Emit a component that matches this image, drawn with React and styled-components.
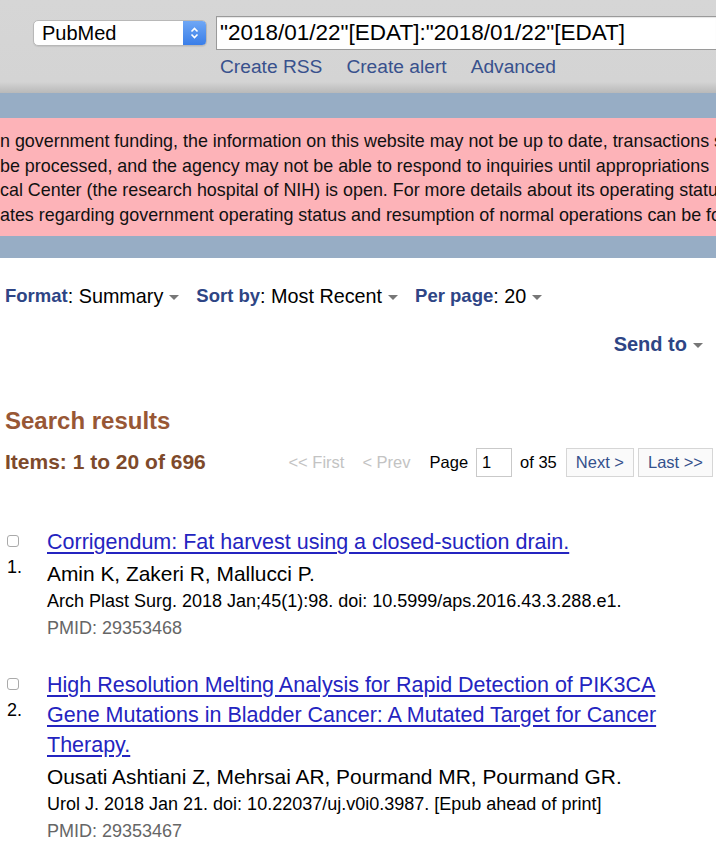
import React from 'react';
import styled, { createGlobalStyle } from 'styled-components';

const GlobalStyle = createGlobalStyle`
  html, body {
    margin: 0;
    padding: 0;
    background: #fff;
    font-family: "Liberation Sans", Arial, Helvetica, sans-serif;
    overflow: hidden;
  }
`;

const Page = styled.div`
  width: 716px;
  height: 855px;
  overflow: hidden;
`;

const SearchBar = styled.div`
  height: 93px;
  background: linear-gradient(#d6d6d6 0%, #d4d4d4 88%, #b9b9b9 100%);
  padding: 16px 0 0 33px;
  box-sizing: border-box;
`;

const SearchRow = styled.div`
  display: flex;
  align-items: center;
  gap: 9px;
`;

const DbSelect = styled.div`
  width: 174px;
  height: 26px;
  box-sizing: border-box;
  border: 1px solid #b8b8b8;
  border-radius: 5px;
  background: #fff;
  display: flex;
  align-items: center;
  justify-content: space-between;
  font-size: 20px;
  color: #000;
  padding-left: 8px;
  overflow: hidden;
  box-shadow: 0 1px 1px rgba(0, 0, 0, 0.08);
`;

const Stepper = styled.div`
  width: 23px;
  height: 100%;
  background: linear-gradient(#6fa7f5, #3a7ee8);
  display: flex;
  align-items: center;
  justify-content: center;
`;

const QueryInput = styled.div`
  flex: 1;
  height: 34px;
  box-sizing: border-box;
  border: 1px solid #9a9a9a;
  border-right: none;
  background: #fff;
  font-size: 22.5px;
  line-height: 32px;
  padding-left: 3px;
  white-space: nowrap;
  overflow: hidden;
  box-shadow: inset 0 1px 1px rgba(0, 0, 0, 0.1);
`;

const SearchLinks = styled.div`
  display: flex;
  gap: 24px;
  margin: 6px 0 0 187px;
`;

const TopLink = styled.span`
  font-size: 19.2px;
  color: #38518d;
`;

const Band = styled.div`
  background: #97adc5;
  padding: 25px 0 22px;
`;

const Notice = styled.div`
  background: #fdb3b8;
  padding: 11px 0 9px;
  overflow: hidden;
`;

const NoticeLine = styled.div`
  font-size: 17.9px;
  line-height: 24.5px;
  color: #111;
  white-space: nowrap;
`;

const Toolbar = styled.div`
  display: flex;
  align-items: center;
  gap: 17px;
  padding: 27px 0 0 5px;
  font-size: 19.8px;
  height: 22px;
`;

const Setting = styled.span`
  display: inline-flex;
  align-items: center;
  color: #000;
`;

const Label = styled.span`
  font-weight: bold;
  font-size: 18.5px;
  color: #2e4585;
`;

const Caret = styled.span`
  display: inline-block;
  width: 0;
  height: 0;
  border-left: 5.5px solid transparent;
  border-right: 5.5px solid transparent;
  border-top: 5px solid #777;
  margin-left: 6px;
  margin-top: 3px;
`;

const SendRow = styled.div`
  display: flex;
  justify-content: flex-end;
  padding: 26px 13px 0 0;
  height: 22px;

  ${Label} {
    font-size: 20px;
  }
`;

const Heading = styled.h2`
  margin: 52px 0 0 5px;
  font-size: 24px;
  line-height: 28px;
  color: #985735;
  font-weight: bold;
`;

const ItemsRow = styled.div`
  display: flex;
  align-items: center;
  justify-content: space-between;
  margin: 12px 3px 0 5px;
  height: 30px;
`;

const Items = styled.div`
  font-size: 21px;
  font-weight: bold;
  color: #7e4a2b;
`;

const Pager = styled.div`
  display: flex;
  align-items: center;
  font-size: 16.5px;
`;

const PagerText = styled.span`
  color: ${(p) => (p.muted ? '#c3c3c3' : '#000')};
  margin-right: ${(p) => p.gap || 0}px;
`;

const PageBox = styled.div`
  width: 36px;
  height: 29px;
  box-sizing: border-box;
  border: 1px solid #c9c9c9;
  padding-left: 5px;
  line-height: 27px;
  margin-right: 8px;
`;

const PagerButton = styled.div`
  height: 27px;
  line-height: 27px;
  border: 1px solid #d6d6d6;
  background: #fafafa;
  color: #34508c;
  padding: 0 9px;
  margin-left: ${(p) => p.gap || 0}px;
`;

const Results = styled.div`
  margin-top: 50px;
`;

const Result = styled.div`
  display: grid;
  grid-template-columns: 47px 1fr;
  margin-bottom: 28px;
`;

const Marker = styled.div`
  padding-left: 7px;
  padding-top: 8px;
`;

const Check = styled.div`
  width: 12px;
  height: 12px;
  box-sizing: border-box;
  border: 1px solid #aaa;
  border-radius: 3px;
  background: #fff;
`;

const Num = styled.div`
  font-size: 18px;
  margin-top: 10px;
  color: #000;
`;

const Title = styled.a`
  display: block;
  font-size: 21.5px;
  line-height: 30px;
  color: #2424c0;
  text-decoration: underline;
  text-underline-offset: 3px;
  padding-right: 40px;
`;

const Authors = styled.div`
  font-size: 20.9px;
  line-height: 28px;
  margin-top: 3px;
  color: #000;
`;

const Citation = styled.div`
  font-size: 18px;
  line-height: 27px;
  color: #000;
`;

const Pmid = styled.div`
  font-size: 18px;
  line-height: 27px;
  color: #666;
`;

const notice = [
  'n government funding, the information on this website may not be up to date, transactions s',
  'be processed, and the agency may not be able to respond to inquiries until appropriations',
  'cal Center (the research hospital of NIH) is open. For more details about its operating statu',
  'ates regarding government operating status and resumption of normal operations can be fo',
];

const results = [
  {
    title: 'Corrigendum: Fat harvest using a closed-suction drain.',
    authors: 'Amin K, Zakeri R, Mallucci P.',
    citation: 'Arch Plast Surg. 2018 Jan;45(1):98. doi: 10.5999/aps.2016.43.3.288.e1.',
    pmid: '29353468',
  },
  {
    title:
      'High Resolution Melting Analysis for Rapid Detection of PIK3CA Gene Mutations in Bladder Cancer: A Mutated Target for Cancer Therapy.',
    authors: 'Ousati Ashtiani Z, Mehrsai AR, Pourmand MR, Pourmand GR.',
    citation: 'Urol J. 2018 Jan 21. doi: 10.22037/uj.v0i0.3987. [Epub ahead of print]',
    pmid: '29353467',
  },
];

const StepperIcon = () => (
  <svg width="9" height="14" viewBox="0 0 9 14" fill="none" stroke="#fff" strokeWidth="1.6">
    <path d="M1.5 5.5 L4.5 2.5 L7.5 5.5" />
    <path d="M1.5 8.5 L4.5 11.5 L7.5 8.5" />
  </svg>
);

const App = () => {
  return (
    <Page>
      <GlobalStyle />
      <SearchBar>
        <SearchRow>
          <DbSelect>
            PubMed
            <Stepper>
              <StepperIcon />
            </Stepper>
          </DbSelect>
          <QueryInput>"2018/01/22"[EDAT]:"2018/01/22"[EDAT]</QueryInput>
        </SearchRow>
        <SearchLinks>
          <TopLink>Create RSS</TopLink>
          <TopLink>Create alert</TopLink>
          <TopLink>Advanced</TopLink>
        </SearchLinks>
      </SearchBar>

      <Band>
        <Notice>
          {notice.map((line) => (
            <NoticeLine key={line}>{line}</NoticeLine>
          ))}
        </Notice>
      </Band>

      <Toolbar>
        <Setting>
          <Label>Format</Label>: Summary
          <Caret />
        </Setting>
        <Setting>
          <Label>Sort by</Label>: Most Recent
          <Caret />
        </Setting>
        <Setting>
          <Label>Per page</Label>: 20
          <Caret />
        </Setting>
      </Toolbar>

      <SendRow>
        <Setting>
          <Label>Send to</Label>
          <Caret />
        </Setting>
      </SendRow>

      <Heading>Search results</Heading>

      <ItemsRow>
        <Items>Items: 1 to 20 of 696</Items>
        <Pager>
          <PagerText muted gap={18}>&lt;&lt; First</PagerText>
          <PagerText muted gap={19}>&lt; Prev</PagerText>
          <PagerText gap={8}>Page</PagerText>
          <PageBox>1</PageBox>
          <PagerText gap={9}>of 35</PagerText>
          <PagerButton>Next &gt;</PagerButton>
          <PagerButton gap={4}>Last &gt;&gt;</PagerButton>
        </Pager>
      </ItemsRow>

      <Results>
        {results.map((r, i) => (
          <Result key={r.pmid}>
            <Marker>
              <Check />
              <Num>{i + 1}.</Num>
            </Marker>
            <div>
              <Title href="#">{r.title}</Title>
              <Authors>{r.authors}</Authors>
              <Citation>{r.citation}</Citation>
              <Pmid>PMID: {r.pmid}</Pmid>
            </div>
          </Result>
        ))}
      </Results>
    </Page>
  );
};

export default App;
